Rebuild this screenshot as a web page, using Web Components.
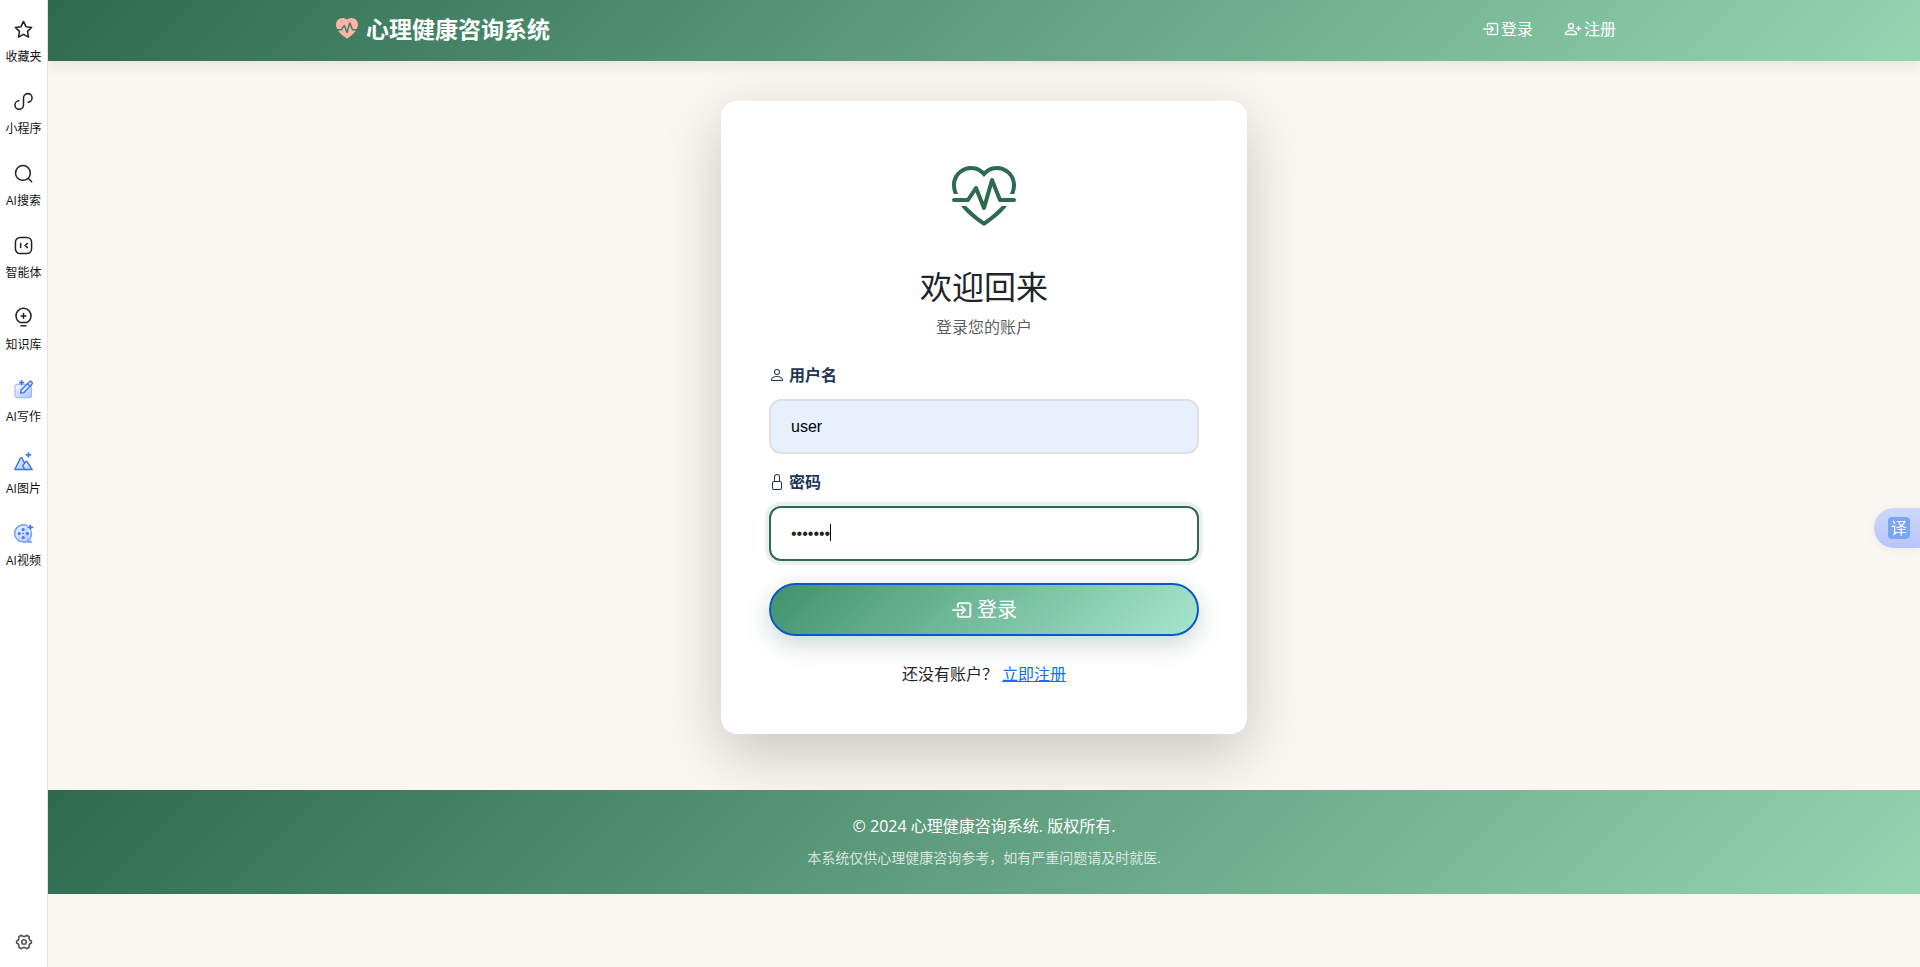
<!DOCTYPE html>
<html lang="zh-CN">
<head>
<meta charset="utf-8">
<meta name="viewport" content="width=device-width, initial-scale=1">
<title>登录 - 心理健康咨询系统</title>
<style>
  :root {
    --green-dark: #2d6a4f;
    --green-light: #95d5b2;
    --brand-gradient: linear-gradient(135deg, #2d6a4f, #95d5b2);
    --ink: #212529;
  }
  body {
    margin: 0;
    background: #faf7f2;
    color: var(--ink);
    font: 16px/24px "Open Sans", "Noto Sans CJK SC", sans-serif;
  }
</style>
</head>
<body>
<app-shell>
  <side-rail slot="rail">
    <rail-item icon="star">收藏夹</rail-item>
    <rail-item icon="mini">小程序</rail-item>
    <rail-item icon="search">AI搜索</rail-item>
    <rail-item icon="agent">智能体</rail-item>
    <rail-item icon="bulb">知识库</rail-item>
    <rail-item icon="write">AI写作</rail-item>
    <rail-item icon="image">AI图片</rail-item>
    <rail-item icon="video">AI视频</rail-item>
  </side-rail>
  <site-header>
    <span slot="brand">心理健康咨询系统</span>
    <nav-link icon="login">登录</nav-link>
    <nav-link icon="person-plus">注册</nav-link>
  </site-header>
  <login-card></login-card>
  <site-footer>
    <span slot="copyright">© 2024 心理健康咨询系统. 版权所有.</span>
    <span slot="notice">本系统仅供心理健康咨询参考，如有严重问题请及时就医.</span>
  </site-footer>
</app-shell>
<translate-tab></translate-tab>

<script>
const line = (body) => `<svg viewBox="0 0 20 20" fill="none" stroke="#222" stroke-width="1.6" stroke-linecap="round" stroke-linejoin="round">${body}</svg>`;
const solid = (body) => `<svg viewBox="0 0 16 16" fill="currentColor">${body}</svg>`;
const blue = (id, body) => `<svg viewBox="0 0 20 20" fill="none" stroke="#3d75f5" stroke-width="1.5" stroke-linecap="round" stroke-linejoin="round"><defs><linearGradient id="${id}" x1="0" y1="0" x2="1" y2="1"><stop offset="0" stop-color="#f2f6ff"/><stop offset="1" stop-color="#a9c4ff"/></linearGradient></defs>${body}</svg>`;

const ICONS = {
  star: line('<path d="M10 1.500l2.600 5.500 6 .8-4.400 4.200 1.100 6L10 15.100 4.700 18l1.100-6L1.400 7.800l6-.8z"/>'),
  mini: line('<path d="M14.900 10.700a4.500 4.500 0 1 0-4.900-4.500v7.600a4.500 4.500 0 1 1-4.900-4.500"/>'),
  search: line('<circle cx="9.400" cy="9.400" r="7.800"/><path d="M15.200 15.200l3.400 3.400"/>'),
  agent: line('<rect x="1.500" y="1.500" width="17" height="17" rx="5"/><path d="M7 8v4M14 8l-2.400 2 2.400 2"/>'),
  bulb: line('<path d="M6.2 15.200a7.900 7.900 0 1 1 7.600 0zM10 5.800v5M7.500 8.300h5M7.400 18.800h5.200"/>'),
  write: blue('fillWrite', '<path d="M3 4.500h13.500a2 2 0 0 1 2 2v10.200a2 2 0 0 1-2 2H3a2 2 0 0 1-2-2V6.500a2 2 0 0 1 2-2z" fill="url(#fillWrite)" stroke="#8fb2ff" stroke-width="1"/><path d="M7 13.800l.5-3.300 8.600-8.500a1.800 1.800 0 0 1 2.600 2.600l-8.400 8.700z" fill="#e3ecff"/><path d="M14.200 4l2.500 2.400"/><path d="M8 .8v4M6 2.800h4" stroke-width="1.700"/>'),
  image: blue('fillImage', '<path d="M.8 18.500L6.700 6.500a1 1 0 0 1 1.800 0l5.900 12z" fill="url(#fillImage)"/><path d="M11.200 18.500l-1.900-4.200 3-4a1 1 0 0 1 1.600 0l5.300 8.200z" fill="url(#fillImage)"/><path d="M15.200.8v4.400M13 3h4.400" stroke-width="1.800"/>'),
  video: blue('fillVideo', '<path d="M14 2A9 9 0 1 0 9.700 18.900h8.900M18 7.500a9 9 0 0 1-3.400 9.600" fill="url(#fillVideo)" stroke="#6f9bff"/><g fill="#3d75f5" stroke="none"><circle cx="9.700" cy="5.700" r="1.600"/><circle cx="5.500" cy="10" r="1.600"/><circle cx="14" cy="10" r="1.600"/><circle cx="9.700" cy="14.200" r="1.600"/><circle cx="9.700" cy="10" r=".8"/></g><path d="M17.200 1.400v4.400M15 3.600h4.400" stroke-width="1.800"/>'),
  gear: `<svg viewBox="0 0 20 20" fill="none" stroke="#555" stroke-width="2" stroke-linejoin="round"><path d="M6.600 1.600l1.900 1.400h3l1.900-1.400 3 1.800-.1 2.400 1.100 2 1.800.9v2.600l-1.800.9-1.100 2 .1 2.400-3 1.800-1.900-1.400h-3l-1.900 1.400-3-1.800.1-2.400-1.100-2-1.800-.9V8.700l1.800-.9 1.100-2-.1-2.400z"/><circle cx="10" cy="10" r="2.800"/></svg>`,
  heart: solid('<path d="m8 2.748-.717-.737C5.6.281 2.514.878 1.4 3.053.918 3.995.78 5.323 1.508 7H.43c-2.128-5.697 4.165-8.83 7.394-5.857q.09.083.176.171a3 3 0 0 1 .176-.17c3.23-2.974 9.522.159 7.394 5.856h-1.078c.728-1.677.59-3.005.108-3.947C13.486.878 10.4.28 8.717 2.01zM2.212 10h1.315C4.593 11.183 6.05 12.458 8 13.795c1.949-1.337 3.407-2.612 4.473-3.795h1.315c-1.265 1.566-3.14 3.25-5.788 5-2.648-1.75-4.523-3.434-5.788-5"/><path d="M10.464 3.314a.5.5 0 0 0-.945.049L7.921 8.956 6.464 5.314a.5.5 0 0 0-.88-.091L3.732 8H.5a.5.5 0 0 0 0 1H4a.5.5 0 0 0 .416-.223l1.473-2.209 1.647 4.118a.5.5 0 0 0 .945-.049l1.598-5.593 1.457 3.642A.5.5 0 0 0 12 9h3.5a.5.5 0 0 0 0-1h-3.162z"/>'),
  'heart-fill': solid('<path d="M1.475 9C2.702 10.84 4.779 12.871 8 15c3.221-2.129 5.298-4.16 6.525-6H12a.5.5 0 0 1-.464-.314l-1.457-3.642-1.598 5.593a.5.5 0 0 1-.945.049L5.889 6.568l-1.473 2.21A.5.5 0 0 1 4 9z"/><path d="M.88 8C-2.427 1.68 4.41-2 7.823 1.143q.09.083.176.171a3 3 0 0 1 .176-.17C11.59-2 18.426 1.68 15.12 8h-2.783l-1.874-4.686a.5.5 0 0 0-.945.049L7.921 8.956 6.464 5.314a.5.5 0 0 0-.88-.091L3.732 8z"/>'),
  person: solid('<path d="M8 8a3 3 0 1 0 0-6 3 3 0 0 0 0 6m2-3a2 2 0 1 1-4 0 2 2 0 0 1 4 0m4 8c0 1-1 1-1 1H3s-1 0-1-1 1-4 6-4 6 3 6 4m-1-.004c-.001-.246-.154-.986-.832-1.664C11.516 10.68 10.289 10 8 10s-3.516.68-4.168 1.332c-.678.678-.83 1.418-.832 1.664z"/>'),
  lock: solid('<path d="M8 1a2 2 0 0 1 2 2v4H6V3a2 2 0 0 1 2-2m3 6V3a3 3 0 0 0-6 0v4a2 2 0 0 0-2 2v5a2 2 0 0 0 2 2h6a2 2 0 0 0 2-2V9a2 2 0 0 0-2-2M5 8h6a1 1 0 0 1 1 1v5a1 1 0 0 1-1 1H5a1 1 0 0 1-1-1V9a1 1 0 0 1 1-1"/>'),
  login: solid('<path fill-rule="evenodd" d="M6 3.5a.5.5 0 0 1 .5-.5h8a.5.5 0 0 1 .5.5v9a.5.5 0 0 1-.5.5h-8a.5.5 0 0 1-.5-.5v-2a.5.5 0 0 0-1 0v2A1.5 1.5 0 0 0 6.5 14h8a1.5 1.5 0 0 0 1.5-1.5v-9A1.5 1.5 0 0 0 14.5 2h-8A1.5 1.5 0 0 0 5 3.5v2a.5.5 0 0 0 1 0z"/><path fill-rule="evenodd" d="M11.854 8.354a.5.5 0 0 0 0-.708l-3-3a.5.5 0 1 0-.708.708L10.293 7.5H1.500a.5.5 0 0 0 0 1h8.793l-2.147 2.146a.5.5 0 0 0 .708.708z"/>'),
  'person-plus': solid('<path d="M6 8a3 3 0 1 0 0-6 3 3 0 0 0 0 6m2-3a2 2 0 1 1-4 0 2 2 0 0 1 4 0m4 8c0 1-1 1-1 1H1s-1 0-1-1 1-4 6-4 6 3 6 4m-1-.004c-.001-.246-.154-.986-.832-1.664C9.516 10.68 8.289 10 6 10s-3.516.68-4.168 1.332c-.678.678-.83 1.418-.832 1.664z"/><path fill-rule="evenodd" d="M13.5 5a.5.5 0 0 1 .5.5V7h1.5a.5.5 0 0 1 0 1H14v1.500a.5.5 0 0 1-1 0V8h-1.500a.5.5 0 0 1 0-1H13V5.500a.5.5 0 0 1 .5-.5"/>')
};

class Base extends HTMLElement {
  connectedCallback() {
    if (this.shadowRoot) return;
    this.attachShadow({ mode: 'open', delegatesFocus: true }).innerHTML =
      `<style>*{box-sizing:border-box}${this.css()}</style>${this.html()}`;
    this.ready();
  }
  ready() {}
}

customElements.define('ui-icon', class extends Base {
  css() { return `
    :host{display:inline-block;flex:none;width:var(--size,16px);height:var(--size,16px)}
    :host([bold]) svg{stroke:currentColor;stroke-width:.4px}
    svg{display:block;width:100%;height:100%;overflow:visible}`; }
  html() { return ICONS[this.getAttribute('name')]; }
});

customElements.define('app-shell', class extends Base {
  css() { return `
    :host{display:grid;grid-template-columns:48px minmax(0,1fr);min-height:100vh}
    .page{display:flex;flex-direction:column}`; }
  html() { return `<slot name="rail"></slot><div class="page"><slot></slot></div>`; }
});

customElements.define('side-rail', class extends Base {
  css() { return `
    :host{display:flex;flex-direction:column;justify-content:space-between;position:sticky;top:0;height:100vh;
      box-sizing:border-box;background:#fff;border-right:1px solid #e3e3e3;padding:20px 0 17px}
    nav{display:flex;flex-direction:column;gap:25px}
    button{display:flex;justify-content:center;border:0;background:none;padding:0;--size:16px}`; }
  html() { return `<nav aria-label="侧边栏"><slot></slot></nav><button type="button" aria-label="设置"><ui-icon name="gear"></ui-icon></button>`; }
});

customElements.define('rail-item', class extends Base {
  css() { return `
    :host{display:block}
    button{display:flex;flex-direction:column;align-items:center;gap:8px;width:100%;padding:0;border:0;background:none;
      color:#111;font:12px/20px "Open Sans","Noto Sans CJK SC",sans-serif;white-space:nowrap;--size:19px}`; }
  html() { return `<button type="button"><ui-icon name="${this.getAttribute('icon')}"></ui-icon><span><slot></slot></span></button>`; }
});

customElements.define('site-header', class extends Base {
  css() { return `
    :host{display:block;background:var(--brand-gradient);box-shadow:0 2px 15px rgba(0,0,0,.1);color:#fff}
    .inner{display:flex;align-items:center;justify-content:space-between;box-sizing:border-box;max-width:1320px;min-height:61px;margin:0 auto;padding:0 28px 4px 12px}
    .brand{display:flex;align-items:center;gap:8px;color:inherit;text-decoration:none;font-size:23px;line-height:32px;font-weight:700;--size:22px}
    .brand ui-icon{color:#ffb3a7}
    nav{display:flex;gap:32px}`; }
  html() { return `<div class="inner"><a class="brand" href="#"><ui-icon name="heart-fill"></ui-icon><slot name="brand"></slot></a><nav><slot></slot></nav></div>`; }
});

customElements.define('nav-link', class extends Base {
  css() { return `
    :host{display:block}
    a{display:flex;align-items:center;gap:3px;color:#fff;text-decoration:none}`; }
  html() { return `<a href="#"><ui-icon bold name="${this.getAttribute('icon')}"></ui-icon><slot></slot></a>`; }
});

customElements.define('form-field', class extends Base {
  css() { return `
    :host{display:block}
    label{display:flex;align-items:center;gap:4px;margin-bottom:12px;color:#1d3557;font-weight:700}
    .box{position:relative}
    input{display:block;width:100%;height:55px;padding:0 20px;border:2px solid #e0e0e0;border-radius:12px;background:#fff;
      color:#212529;font:16px/24px "Liberation Sans",sans-serif;outline:0}
    input.filled{background:#e8f0fe;color:#000}
    input:focus{border-color:var(--green-dark);box-shadow:0 0 0 4px rgba(45,106,79,.1)}
    /* Steady insertion mark shown until the user starts editing. */
    .box.resting input{caret-color:transparent}
    .box.resting::after{content:"";position:absolute;left:61px;top:18px;width:1px;height:17px;background:#000}`; }
  html() {
    const type = this.getAttribute('type');
    return `<label for="field"><ui-icon name="${this.getAttribute('icon')}"></ui-icon><span><slot></slot></span></label>
      <div class="box"><input id="field" type="${type}" value="${this.getAttribute('value')}" class="${type === 'text' ? 'filled' : ''}"></div>`;
  }
  ready() {
    if (!this.hasAttribute('active')) return;
    const box = this.shadowRoot.querySelector('.box');
    const input = box.querySelector('input');
    input.focus();
    input.setSelectionRange(input.value.length, input.value.length);
    box.classList.add('resting');
    for (const type of ['keydown', 'pointerdown', 'blur']) {
      input.addEventListener(type, () => box.classList.remove('resting'), { once: true });
    }
  }
});

customElements.define('login-card', class extends Base {
  css() { return `
    :host{display:block;padding:40px 12px 56px}
    .card{max-width:526px;margin:0 auto;padding:48px;border-radius:16px;background:#fff;box-shadow:0 20px 60px rgba(0,0,0,.2)}
    header{text-align:center;margin-bottom:24px}
    .mark{display:flex;align-items:center;justify-content:center;height:98px;margin-bottom:20px;color:var(--green-dark);--size:64px}
    h2{margin:0 0 8px;font-size:32px;line-height:40px;font-weight:400}
    p{margin:0}
    header p{color:rgba(33,37,41,.75)}
    form{display:flex;flex-direction:column;gap:16px}
    button{display:flex;align-items:center;justify-content:center;gap:6px;height:53px;margin-top:6px;border:2px solid #0a58ca;border-radius:27px;
      background:linear-gradient(135deg,#40916c,#a8e6cf) border-box;box-shadow:0 8px 25px rgba(45,106,79,.25);color:#fff;font:inherit;font-size:20px;--size:20px}
    .switch{margin-top:26px;text-align:center}
    .switch a{color:#0d6efd}`; }
  html() { return `<main class="card">
      <header><div class="mark"><ui-icon name="heart"></ui-icon></div><h2>欢迎回来</h2><p>登录您的账户</p></header>
      <form>
        <form-field icon="person" type="text" value="user">用户名</form-field>
        <form-field icon="lock" type="password" value="user123" active>密码</form-field>
        <button type="submit"><ui-icon bold name="login"></ui-icon>登录</button>
      </form>
      <p class="switch">还没有账户？ <a href="#">立即注册</a></p>
    </main>`; }
});

customElements.define('site-footer', class extends Base {
  css() { return `
    :host{display:block;position:relative;background:var(--brand-gradient);padding:24px;color:#fff;text-align:center}
    p{margin:0}
    p+p{margin-top:8px;font-size:14px;color:rgba(255,255,255,.75)}`; }
  html() { return `<footer><p><slot name="copyright"></slot></p><p><slot name="notice"></slot></p></footer>`; }
});

/* Floating tab docked to the right edge of the window. */
customElements.define('translate-tab', class extends Base {
  css() { return `
    :host{position:fixed;right:0;top:calc(50% + 24px);display:block}
    button{display:flex;align-items:center;width:46px;height:40px;padding:0 0 0 14px;border:0;border-radius:20px 0 0 20px;
      background:linear-gradient(#ccd9fb,#b8c4fa);box-shadow:0 2px 10px rgba(0,0,0,.06)}
    span{display:block;width:22px;height:22px;border-radius:4px;background:#79a6f4;color:#fff;text-align:center;font:16px/20px "Noto Sans CJK SC",sans-serif}`; }
  html() { return `<button type="button" aria-label="翻译"><span>译</span></button>`; }
});
</script>
</body>
</html>
